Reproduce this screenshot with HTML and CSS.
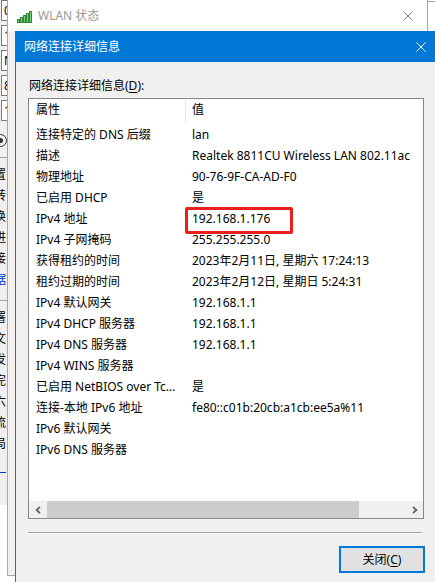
FILE: index.html
```html
<!DOCTYPE html>
<html lang="zh-CN">
<head>
<meta charset="utf-8">
<title>网络连接详细信息</title>
<link rel="stylesheet" href="styles.css">
</head>
<body>
<div class="desktop">
  <div class="bgwin">
    <div class="field">0</div>
    <div class="field">1</div>
    <div class="field">N</div>
    <div class="field">8</div>
    <div class="field">1</div>
    <div class="radio"><span class="dot"></span></div>
    <div class="bg-rule"></div>
    <div class="bg-list">
      <div>置</div><div>转</div><div>换</div><div>进</div><div>接</div><div class="link">据</div>
    </div>
    <div class="bg-rule"></div>
    <div class="bg-list">
      <div>署</div><div>文</div><div>发</div><div>完</div><div>六</div><div>流</div><div>局</div>
    </div>
    <div class="bg-dash"></div>
  </div>
  <div class="bg-top"></div>

  <div class="win wlan">
    <div class="wlan-title">
      <svg class="signal" width="16" height="12" viewBox="0 0 16 12">
        <rect x="0.5" y="8.5" width="2" height="3" />
        <rect x="3.5" y="6.5" width="2" height="5" />
        <rect x="6.5" y="4.5" width="2" height="7" />
        <rect x="9.5" y="2.5" width="2" height="9" />
        <rect x="12.5" y="0.5" width="2" height="11" />
      </svg>
      <span class="wlan-name">WLAN 状态</span>
      <svg class="xicon gray" width="10" height="10" viewBox="0 0 10 10"><path d="M0.5 0.5L9.5 9.5M9.5 0.5L0.5 9.5"/></svg>
    </div>
  </div>

  <div class="win dlg">
    <div class="dlg-title">
      <span class="dlg-name">网络连接详细信息</span>
      <svg class="xicon white" width="10" height="10" viewBox="0 0 10 10"><path d="M0.5 0.5L9.5 9.5M9.5 0.5L0.5 9.5"/></svg>
    </div>
    <div class="dlg-body">
      <div class="label">网络连接详细信息(<u>D</u>):</div>
      <div class="list">
        <div class="hdr"><div class="c1">属性</div><div class="c2">值</div></div>
        <div class="rows">
          <div class="row"><div class="c1">连接特定的 DNS 后缀</div><div class="c2">lan</div></div>
          <div class="row"><div class="c1">描述</div><div class="c2">Realtek 8811CU Wireless LAN 802.11ac</div></div>
          <div class="row"><div class="c1">物理地址</div><div class="c2">90-76-9F-CA-AD-F0</div></div>
          <div class="row"><div class="c1">已启用 DHCP</div><div class="c2">是</div></div>
          <div class="row"><div class="c1">IPv4 地址</div><div class="c2">192.168.1.176</div></div>
          <div class="row"><div class="c1">IPv4 子网掩码</div><div class="c2">255.255.255.0</div></div>
          <div class="row"><div class="c1">获得租约的时间</div><div class="c2">2023年2月11日, 星期六 17:24:13</div></div>
          <div class="row"><div class="c1">租约过期的时间</div><div class="c2">2023年2月12日, 星期日 5:24:31</div></div>
          <div class="row"><div class="c1">IPv4 默认网关</div><div class="c2">192.168.1.1</div></div>
          <div class="row"><div class="c1">IPv4 DHCP 服务器</div><div class="c2">192.168.1.1</div></div>
          <div class="row"><div class="c1">IPv4 DNS 服务器</div><div class="c2">192.168.1.1</div></div>
          <div class="row"><div class="c1">IPv4 WINS 服务器</div><div class="c2"></div></div>
          <div class="row"><div class="c1">已启用 NetBIOS over Tc...</div><div class="c2">是</div></div>
          <div class="row"><div class="c1">连接-本地 IPv6 地址</div><div class="c2">fe80::c01b:20cb:a1cb:ee5a%11</div></div>
          <div class="row"><div class="c1">IPv6 默认网关</div><div class="c2"></div></div>
          <div class="row"><div class="c1">IPv6 DNS 服务器</div><div class="c2"></div></div>
        </div>
        <div class="hscroll">
          <div class="sbtn"><svg width="6" height="8" viewBox="0 0 6 8"><path d="M5 0.8L1.6 4L5 7.2"/></svg></div>
          <div class="track"><div class="thumb"></div></div>
          <div class="sbtn"><svg width="6" height="8" viewBox="0 0 6 8"><path d="M1 0.8L4.4 4L1 7.2"/></svg></div>
        </div>
        <div class="mark"></div>
      </div>
      <div class="sep"></div>
      <div class="btns"><div class="btn">关闭(<u>C</u>)</div></div>
    </div>
  </div>
</div>
</body>
</html>
```

FILE: styles.css
```css
* { box-sizing: border-box; }
html, body { margin: 0; padding: 0; background: #fff; }
body {
  font-family: "Noto Sans", "Noto Sans CJK SC", sans-serif;
  font-size: 12px;
  color: #000;
}
.desktop {
  position: relative;
  width: 435px;
  height: 582px;
  overflow: hidden;
  background: #fff;
}

/* window behind, left strip */
.bgwin {
  position: absolute;
  left: 0;
  top: 0;
  width: 8px;
  height: 505px;
  background: #f0f0f0;
  overflow: hidden;
  display: flex;
  flex-direction: column;
}
.field {
  margin: 0 0 4px 1px;
  height: 21px;
  width: 30px;
  border: 1px solid #7a7a7a;
  background: #fff;
  padding-left: 2px;
  line-height: 19px;
  flex: none;
}
.radio {
  margin: 9px 0 0 -6px;
  width: 13px;
  height: 13px;
  border: 1px solid #333;
  border-radius: 50%;
  display: flex;
  align-items: center;
  justify-content: center;
  flex: none;
}
.dot { width: 5px; height: 5px; border-radius: 50%; background: #333; }
.bg-rule { height: 1px; background: #a0a0a0; margin: 10px 0 6px; flex: none; }
.bg-list { margin-left: -6px; line-height: 21px; }
.bg-list .link { color: #0033cc; }
.bg-dash { margin: 18px 0 0 0; width: 6px; height: 1px; background: #0033cc; }
.bg-top {
  position: absolute;
  left: 427px;
  top: 1px;
  width: 8px;
  height: 1px;
  background: #a0a0a0;
}

.win { position: absolute; }

/* WLAN status window */
.wlan {
  left: 7px;
  top: -1px;
  width: 421px;
  height: 577px;
  border: 1px solid #a8a8a8;
  background: #f0f0f0;
}
.wlan-title {
  height: 31px;
  background: #fff;
  display: flex;
  align-items: center;
  padding: 1px 0 0 9px;
}
.signal rect { fill: #7ccc7c; stroke: #2f8a3a; stroke-width: 1; }
.signal { margin-top: 1px; }
.wlan-name { margin-left: 5px; color: #999; line-height: 16px; }
.xicon path { fill: none; stroke-width: 1; }
.xicon.gray path { stroke: #8a8a8a; }
.xicon.white path { stroke: #fff; }
.wlan-title .xicon { margin-left: auto; margin-right: 14px; }

/* details dialog */
.dlg {
  left: 15px;
  top: 31px;
  width: 424px;
  height: 560px;
  border: 1px solid #0078d7;
  border-top: 0;
  background: #f0f0f0;
  display: flex;
  flex-direction: column;
}
.dlg-title {
  height: 31px;
  background: #0078d7;
  color: #fff;
  display: flex;
  align-items: center;
  padding: 1px 0 0 8px;
  flex: none;
}
.dlg-name { line-height: 16px; }
.dlg-title .xicon { margin-left: auto; margin-right: 12px; }

.dlg-body {
  display: flex;
  flex-direction: column;
  padding: 15px 0 0 12px;
}
.label { line-height: 18px; padding-left: 1px; }
.list {
  position: relative;
  margin-top: 3px;
  width: 396px;
  height: 421px;
  border: 1px solid #828790;
  background: #fff;
  display: flex;
  flex-direction: column;
}
.hdr {
  height: 25px;
  display: flex;
  flex: none;
}
.hdr .c1 {
  border-right: 1px solid #e5e5e5;
  height: 24px;
}
.hdr .c1, .hdr .c2 { padding-top: 3px; line-height: 16px; }
.c1 {
  width: 157px;
  padding-left: 7px;
  white-space: nowrap;
  overflow: hidden;
  flex: none;
}
.c2 {
  padding-left: 6px;
  white-space: nowrap;
  overflow: hidden;
  flex: 1;
}
.rows { flex: 1; }
.row { display: flex; height: 21px; line-height: 21px; }

.hscroll {
  height: 17px;
  display: flex;
  background: #f0f0f0;
  flex: none;
}
.sbtn {
  width: 17px;
  height: 17px;
  display: flex;
  align-items: center;
  justify-content: center;
  flex: none;
}
.sbtn path { fill: none; stroke: #606060; stroke-width: 1.8; }
.track { flex: 1; padding-left: 1px; }
.thumb { width: 312px; height: 17px; background: #cdcdcd; }

.mark {
  position: absolute;
  left: 156px;
  top: 108px;
  width: 108px;
  height: 27px;
  border: 3px solid #e8201c;
  border-radius: 2px;
}

.sep {
  margin-top: 13px;
  width: 394px;
  height: 2px;
  border-top: 1px solid #a0a0a0;
  border-bottom: 1px solid #fff;
}
.btns {
  display: flex;
  justify-content: flex-start;
  padding-left: 311px;
  margin-top: 12px;
}
.btn {
  width: 86px;
  height: 27px;
  border: 2px solid #0078d7;
  background: #e1e1e1;
  display: flex;
  align-items: center;
  justify-content: center;
  line-height: 16px;
}
u { text-underline-offset: 2px; }
```
